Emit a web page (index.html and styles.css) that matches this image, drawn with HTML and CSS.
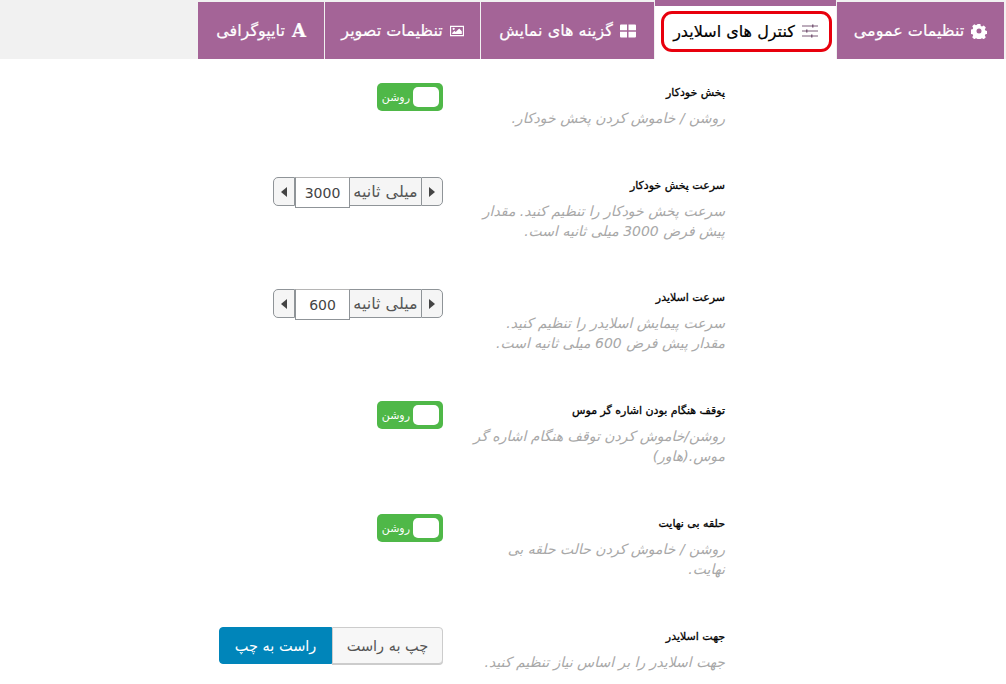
FILE: index.html
```html
<!DOCTYPE html>
<html lang="fa" dir="rtl">

<head>
    <meta charset="utf-8">
    <link rel="stylesheet" href="styles.css">
</head>

<body>
    <div class="tabs">
        <div class="tab">
            <svg class="icon" viewBox="0 0 16 16"><path fill="currentColor" fill-rule="evenodd" d="M6.600 1h2.800l.4 2 1.200.6 1.800-1 2 2-1 1.800.6 1.200 2 .4v2.800l-2 .4-.6 1.200 1 1.800-2 2-1.800-1-1.200.6-.4 2H6.600l-.4-2-1.200-.6-1.800 1-2-2 1-1.800-.6-1.200-2-.4V6.600l2-.4.6-1.200-1-1.800 2-2 1.800 1 1.200-.6zM8 5.500a2.500 2.500 0 1 0 0 5 2.500 2.500 0 0 0 0-5z"/></svg>
            <span>تنظیمات عمومی</span>
        </div>
        <div class="tab active">
            <svg class="icon" viewBox="0 0 16 16"><path fill="none" stroke="currentColor" d="M0 3h16M0 8h16M0 13h16"/><path fill="currentColor" d="M10 1.500h1.500v3H10zM4 6.500h1.500v3H4zM9 11.500h1.500v3H9z"/></svg>
            <span>کنترل های اسلایدر</span>
            <div class="highlight"></div>
        </div>
        <div class="tab">
            <svg class="icon" viewBox="0 0 16 16"><path fill="currentColor" d="M0 2.500A1 1 0 0 1 1 1.500h6v5.800H0zM8.500 1.500H15a1 1 0 0 1 1 1v4.800H8.500zM0 8.700h7v5.800H1a1 1 0 0 1-1-1zM8.500 8.700H16v4.800a1 1 0 0 1-1 1H8.500z"/></svg>
            <span>گزینه های نمایش</span>
        </div>
        <div class="tab">
            <svg class="icon small" viewBox="0 0 16 16"><path fill="currentColor" fill-rule="evenodd" d="M0 2h16v12H0zM1.300 3.300v9.400h13.400V3.300z"/><path fill="currentColor" d="M2.500 11.500v-1.300l2.500-2.500 1.500 1.500 4-4 3 3v3.300z"/><circle fill="currentColor" cx="4.200" cy="5.500" r="1.300"/></svg>
            <span>تنظیمات تصویر</span>
        </div>
        <div class="tab">
            <span class="letter">A</span>
            <span>تایپوگرافی</span>
        </div>
    </div>

    <div class="rows">
        <div class="row short">
            <div class="label">
                <h4>پخش خودکار</h4>
                <p>روشن / خاموش کردن پخش خودکار.</p>
            </div>
            <div class="control">
                <div class="toggle"><span class="knob"></span><span>روشن</span></div>
            </div>
        </div>

        <div class="row first-spin">
            <div class="label">
                <h4>سرعت پخش خودکار</h4>
                <p>سرعت پخش خودکار را تنظیم کنید. مقدار پیش فرض 3000 میلی ثانیه است.</p>
            </div>
            <div class="control">
                <div class="spinner">
                    <button class="arrow"><span class="tri right"></span></button>
                    <span class="unit">میلی ثانیه</span>
                    <span class="value">3000</span>
                    <button class="arrow"><span class="tri left"></span></button>
                </div>
            </div>
        </div>

        <div class="row">
            <div class="label">
                <h4>سرعت اسلایدر</h4>
                <p>سرعت پیمایش اسلایدر را تنظیم کنید. مقدار پیش فرض 600 میلی ثانیه است.</p>
            </div>
            <div class="control">
                <div class="spinner">
                    <button class="arrow"><span class="tri right"></span></button>
                    <span class="unit">میلی ثانیه</span>
                    <span class="value">600</span>
                    <button class="arrow"><span class="tri left"></span></button>
                </div>
            </div>
        </div>

        <div class="row">
            <div class="label">
                <h4>توقف هنگام بودن اشاره گر موس</h4>
                <p>روشن/خاموش کردن توقف هنگام اشاره گر موس.(هاور)</p>
            </div>
            <div class="control">
                <div class="toggle"><span class="knob"></span><span>روشن</span></div>
            </div>
        </div>

        <div class="row">
            <div class="label">
                <h4>حلقه بی نهایت</h4>
                <p>روشن / خاموش کردن حالت حلقه بی نهایت.</p>
            </div>
            <div class="control">
                <div class="toggle"><span class="knob"></span><span>روشن</span></div>
            </div>
        </div>

        <div class="row last">
            <div class="label">
                <h4>جهت اسلایدر</h4>
                <p>جهت اسلایدر را بر اساس نیاز تنظیم کنید.</p>
            </div>
            <div class="control">
                <div class="switch">
                    <button class="btn">چپ به راست</button>
                    <button class="btn on">راست به چپ</button>
                </div>
            </div>
        </div>
    </div>
</body>

</html>
```

FILE: styles.css
```css
* {
    box-sizing: border-box;
}

body {
    margin: 0;
    height: 684px;
    overflow: hidden;
    background: #fff;
    font-family: "DejaVu Sans", sans-serif;
}

.tabs {
    display: flex;
    height: 59px;
    padding: 2px 2px 0 0;
    gap: 1px;
    background: #f1f1f1;
}

.tab {
    position: relative;
    display: flex;
    align-items: center;
    justify-content: center;
    gap: 7px;
    background: #a46497;
    color: #fff;
    font-size: 16px;
    -webkit-text-stroke: 0.2px;
}

.tab:nth-child(1) { width: 167px; }
.tab:nth-child(2) { width: 181px; }
.tab:nth-child(3) { width: 173px; }
.tab:nth-child(4) { width: 155px; }
.tab:nth-child(5) { width: 126px; }

.tab.active {
    margin-top: -2px;
    padding-bottom: 3px;
    background: #fff;
    border-top: 6px solid #a46497;
    color: #000;
}

.tab.active .icon {
    color: #7a5a78;
}

.icon {
    flex: none;
    width: 16px;
    height: 16px;
}

.icon.small {
    width: 14px;
    height: 14px;
}

.letter {
    font-family: "DejaVu Serif", serif;
    font-weight: bold;
    font-size: 18px;
}

/* annotation drawn over the screenshot */
.highlight {
    position: absolute;
    top: 5px;
    left: 6px;
    right: 4px;
    bottom: 7px;
    border: 3px solid #e8000d;
    border-radius: 11px;
}

.rows {
    padding: 24px 281px 0 0;
}

.row {
    display: flex;
    gap: 30px;
    height: 113px;
}

.row.short {
    height: 93px;
}

.row.first-spin {
    height: 112px;
}

.row.last {
    height: auto;
}

.label {
    width: 252px;
}

.label h4 {
    margin: 0;
    padding-top: 1px;
    font-size: 11px;
    line-height: 18px;
    font-weight: normal;
    -webkit-text-stroke: 0.3px #000;
    color: #000;
}

.label p {
    margin: 6px 0 0;
    font-size: 14px;
    line-height: 20px;
    font-style: italic;
    color: #a8a8a8;
}

.toggle {
    display: flex;
    align-items: center;
    gap: 3px;
    width: 66px;
    height: 28px;
    padding: 0 4px;
    border-radius: 5px;
    background: #4fb848;
    color: #fff;
    font-size: 11px;
}

.knob {
    width: 26px;
    height: 20px;
    border-radius: 5px;
    background: #fff;
}

.spinner {
    display: flex;
    align-items: flex-start;
    margin-top: 1px;
    color: #555;
    font-size: 16px;
}

.arrow {
    display: flex;
    align-items: center;
    justify-content: center;
    width: 22px;
    height: 29px;
    padding: 0;
    background: #f5f5f5;
    border: 1px solid #8f9498;
}

.arrow:first-child {
    border-radius: 0 5px 5px 0;
}

.arrow:last-child {
    border-radius: 5px 0 0 5px;
}

.tri {
    width: 0;
    height: 0;
    border-top: 5px solid transparent;
    border-bottom: 5px solid transparent;
}

.tri.right {
    border-left: 6px solid #444;
}

.tri.left {
    border-right: 6px solid #444;
}

.unit {
    display: flex;
    align-items: center;
    justify-content: center;
    width: 71px;
    height: 29px;
    background: #f5f5f5;
    border-top: 1px solid #8f9498;
    border-bottom: 1px solid #8f9498;
}

.value {
    display: flex;
    align-items: center;
    justify-content: center;
    width: 55px;
    height: 31px;
    background: #fff;
    border: 1px solid #8f9498;
    border-top-color: #b5b5b5;
    color: #444;
    font-size: 14px;
}

.switch {
    display: flex;
}

.btn {
    width: 111px;
    height: 37px;
    padding: 0;
    font: inherit;
    font-size: 14.500px;
    color: #555;
    background: #f7f7f7;
    border: 1px solid #ccc;
    box-shadow: 0 1px 0 #ccc;
    border-radius: 0 4px 4px 0;
}

.btn.on {
    width: 113px;
    color: #fff;
    background: #0085ba;
    border-color: #0085ba;
    box-shadow: none;
    border-radius: 4px 0 0 4px;
}
```
